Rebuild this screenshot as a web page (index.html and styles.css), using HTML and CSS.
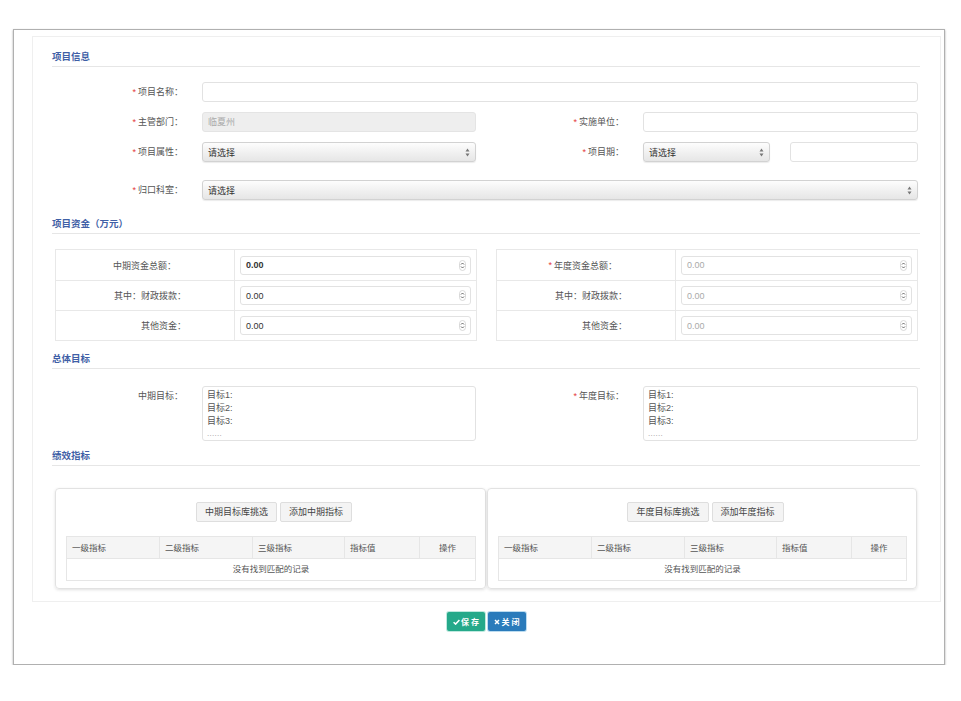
FILE: index.html
```html
<!DOCTYPE html>
<html lang="zh-CN">
<head>
<meta charset="utf-8">
<title>项目信息</title>
<link rel="stylesheet" href="styles.css">
</head>
<body>
<div class="frame">
  <div class="panel">
    <div class="sec-title first">项目信息</div>
    <div class="form-grid">
      <div class="lbl"><i>*</i>项目名称：</div>
      <div class="inp span3"></div>

      <div class="lbl"><i>*</i>主管部门：</div>
      <div class="inp disabled">临夏州</div>
      <div class="lbl"><i>*</i>实施单位：</div>
      <div class="inp"></div>

      <div class="lbl"><i>*</i>项目属性：</div>
      <div class="sel"><span>请选择</span><svg width="5" height="9" viewBox="0 0 5 9"><path d="M2.5 0.5L4.5 3.5H0.5Z M2.5 8.5L0.5 5.5H4.5Z" fill="#777"/></svg></div>
      <div class="lbl"><i>*</i>项目期：</div>
      <div class="pair">
        <div class="sel short"><span>请选择</span><svg width="5" height="9" viewBox="0 0 5 9"><path d="M2.5 0.5L4.5 3.5H0.5Z M2.5 8.5L0.5 5.5H4.5Z" fill="#777"/></svg></div>
        <div class="inp"></div>
      </div>

      <div class="lbl gap"><i>*</i>归口科室：</div>
      <div class="sel span3 gap"><span>请选择</span><svg width="5" height="9" viewBox="0 0 5 9"><path d="M2.5 0.5L4.5 3.5H0.5Z M2.5 8.5L0.5 5.5H4.5Z" fill="#777"/></svg></div>
    </div>

    <div class="sec-title s2">项目资金（万元）</div>
    <div class="fund-wrap">
      <div class="fund">
        <div class="fl r1 wide">中期资金总额：</div>
        <div class="fc r1"><div class="num"><span class="v bold">0.00</span><svg class="spin" width="7" height="11" viewBox="0 0 7 11"><rect x="0.5" y="0.5" width="6" height="10" rx="3" fill="none" stroke="#cfcfcf" stroke-width="0.8"/><path d="M2 4.5L3.5 3L5 4.5M2 6.5L3.5 8L5 6.5" fill="none" stroke="#555" stroke-width="0.9"/></svg></div></div>
        <div class="fl">其中：财政拨款：</div>
        <div class="fc"><div class="num"><span class="v">0.00</span><svg class="spin" width="7" height="11" viewBox="0 0 7 11"><rect x="0.5" y="0.5" width="6" height="10" rx="3" fill="none" stroke="#cfcfcf" stroke-width="0.8"/><path d="M2 4.5L3.5 3L5 4.5M2 6.5L3.5 8L5 6.5" fill="none" stroke="#555" stroke-width="0.9"/></svg></div></div>
        <div class="fl">其他资金：</div>
        <div class="fc"><div class="num"><span class="v">0.00</span><svg class="spin" width="7" height="11" viewBox="0 0 7 11"><rect x="0.5" y="0.5" width="6" height="10" rx="3" fill="none" stroke="#cfcfcf" stroke-width="0.8"/><path d="M2 4.5L3.5 3L5 4.5M2 6.5L3.5 8L5 6.5" fill="none" stroke="#555" stroke-width="0.9"/></svg></div></div>
      </div>
      <div class="fund">
        <div class="fl r1 wide"><i>*</i>年度资金总额：</div>
        <div class="fc r1"><div class="num"><span class="v muted">0.00</span><svg class="spin" width="7" height="11" viewBox="0 0 7 11"><rect x="0.5" y="0.5" width="6" height="10" rx="3" fill="none" stroke="#cfcfcf" stroke-width="0.8"/><path d="M2 4.5L3.5 3L5 4.5M2 6.5L3.5 8L5 6.5" fill="none" stroke="#555" stroke-width="0.9"/></svg></div></div>
        <div class="fl">其中：财政拨款：</div>
        <div class="fc"><div class="num"><span class="v muted">0.00</span><svg class="spin" width="7" height="11" viewBox="0 0 7 11"><rect x="0.5" y="0.5" width="6" height="10" rx="3" fill="none" stroke="#cfcfcf" stroke-width="0.8"/><path d="M2 4.5L3.5 3L5 4.5M2 6.5L3.5 8L5 6.5" fill="none" stroke="#555" stroke-width="0.9"/></svg></div></div>
        <div class="fl">其他资金：</div>
        <div class="fc"><div class="num"><span class="v muted">0.00</span><svg class="spin" width="7" height="11" viewBox="0 0 7 11"><rect x="0.5" y="0.5" width="6" height="10" rx="3" fill="none" stroke="#cfcfcf" stroke-width="0.8"/><path d="M2 4.5L3.5 3L5 4.5M2 6.5L3.5 8L5 6.5" fill="none" stroke="#555" stroke-width="0.9"/></svg></div></div>
      </div>
    </div>

    <div class="sec-title s3">总体目标</div>
    <div class="form-grid goals">
      <div class="lbl">中期目标：</div>
      <div class="ta"><div>目标1:</div><div>目标2:</div><div>目标3:</div><div class="dots">......</div></div>
      <div class="lbl"><i>*</i>年度目标：</div>
      <div class="ta"><div>目标1:</div><div>目标2:</div><div>目标3:</div><div class="dots">......</div></div>
    </div>

    <div class="sec-title s4">绩效指标</div>
    <div class="perf-wrap">
      <div class="perf">
        <div class="btn-row"><span class="btn">中期目标库挑选</span><span class="btn">添加中期指标</span></div>
        <div class="tbl">
          <div class="th">一级指标</div><div class="th">二级指标</div><div class="th">三级指标</div><div class="th">指标值</div><div class="th c">操作</div>
          <div class="empty">没有找到匹配的记录</div>
        </div>
      </div>
      <div class="perf">
        <div class="btn-row"><span class="btn">年度目标库挑选</span><span class="btn">添加年度指标</span></div>
        <div class="tbl">
          <div class="th">一级指标</div><div class="th">二级指标</div><div class="th">三级指标</div><div class="th">指标值</div><div class="th c">操作</div>
          <div class="empty">没有找到匹配的记录</div>
        </div>
      </div>
    </div>
  </div>
  <div class="actions">
    <span class="abtn save"><svg width="7" height="6" viewBox="0 0 7 6"><path d="M0.6 3.2L2.6 5.1L6.4 0.9" fill="none" stroke="#fff" stroke-width="1.5"/></svg>保 存</span>
    <span class="abtn close"><svg width="6" height="6" viewBox="0 0 6 6"><path d="M1 1L5 5M5 1L1 5" fill="none" stroke="#fff" stroke-width="1.5"/></svg>关 闭</span>
  </div>
</div>
</body>
</html>
```

FILE: styles.css
```css
* { box-sizing: border-box; }
html, body { margin: 0; padding: 0; background: #fff; }
body {
  font-family: "Liberation Sans", "Noto Sans CJK SC", sans-serif;
  font-size: 9px;
  color: #555;
}
i { font-style: normal; color: #e4393c; margin-right: 2px; font-size: 9px; }

.frame {
  margin: 29px 0 0 13px;
  width: 932px;
  height: 636px;
  border: 1px solid #b0b0b0;
  box-shadow: 0 1px 2px rgba(0,0,0,0.35);
  padding: 6px 3px 0 18px;
}
.panel {
  border: 1px solid #efefef;
  padding: 0 20px 12px 19px;
}

.sec-title {
  font-size: 9.5px;
  font-weight: bold;
  color: #3f5fa6;
  line-height: 14px;
  padding-bottom: 2px;
  border-bottom: 1px solid #e6e6e6;
}
.sec-title.first { margin-top: 13px; }
.sec-title.s2 { margin-top: 17px; }
.sec-title.s3 { margin-top: 11px; }
.sec-title.s4 { margin-top: 8px; }

.form-grid {
  display: grid;
  grid-template-columns: 150px 274px 167px 275px;
  row-gap: 10px;
  margin-top: 15px;
}
.form-grid.goals { margin-top: 17px; }
.lbl {
  text-align: right;
  padding-right: 19px;
  line-height: 20px;
  height: 20px;
  white-space: nowrap;
}
.span3 { grid-column: 2 / 5; }
.gap { margin-top: 8px; }

.inp {
  height: 20px;
  border: 1px solid #e2e2e2;
  border-radius: 3px;
  background: #fff;
  padding: 0 5px;
  line-height: 18px;
}
.inp.disabled { background: #eee; color: #aaa; border-color: #e4e4e4; }

.sel {
  height: 20px;
  border: 1px solid #d2d2d2;
  border-radius: 3px;
  background: linear-gradient(to bottom, #fdfdfd 0%, #f0f0f0 55%, #e6e6e6 100%);
  box-shadow: 0 1px 1px rgba(0,0,0,0.08);
  padding: 0 5px 0 5px;
  display: flex;
  align-items: center;
  justify-content: space-between;
  color: #333;
}
.pair {
  display: grid;
  grid-template-columns: 127px 128px;
  column-gap: 20px;
}

.fund-wrap {
  display: grid;
  grid-template-columns: 422px 422px;
  column-gap: 19px;
  margin: 15px 0 0 3px;
}
.fund {
  display: grid;
  grid-template-columns: 179px 1fr;
  grid-template-rows: 31px 30px 30px;
  border: 1px solid #e8e8e8;
  border-top: 0;
}
.fl, .fc {
  border-top: 1px solid #e8e8e8;
  display: flex;
  align-items: center;
}
.fl {
  justify-content: flex-end;
  padding-right: 48px;
  border-right: 1px solid #e8e8e8;
  white-space: nowrap;
}
.fl.wide { padding-right: 58px; }
.fc { padding: 0 5px; }
.num {
  width: 100%;
  height: 19px;
  border: 1px solid #e2e2e2;
  border-radius: 3px;
  padding: 0 4px 0 5px;
  display: flex;
  align-items: center;
  justify-content: space-between;
}
.v { color: #333; }
.v.bold { font-weight: bold; }
.v.muted { color: #aaa; }

.ta {
  height: 55px;
  border: 1px solid #e2e2e2;
  border-radius: 3px;
  padding: 2px 4px;
  line-height: 13px;
  color: #555;
}
.ta .dots { color: #999; font-size: 8px; line-height: 12px; letter-spacing: 0.3px; }

.perf-wrap {
  display: grid;
  grid-template-columns: 431px 430px;
  column-gap: 1px;
  margin: 22px 0 0 3px;
}
.perf {
  border: 1px solid #e2e2e2;
  border-radius: 4px;
  box-shadow: 0 1px 3px rgba(0,0,0,0.12);
  padding: 13px 9px 7px 10px;
}
.btn-row {
  display: flex;
  justify-content: center;
  gap: 3px;
  padding-left: 6px;
}
.btn {
  height: 20px;
  line-height: 18px;
  padding: 0 8px;
  background: #f4f4f4;
  border: 1px solid #dedede;
  border-radius: 2px;
  color: #444;
}
.tbl {
  margin-top: 14px;
  border: 1px solid #e6e6e6;
  display: grid;
  grid-template-columns: 92px 93px 92px 75px 1fr;
}
.th {
  height: 22px;
  line-height: 22px;
  background: #f5f5f5;
  border-left: 1px solid #e6e6e6;
  border-bottom: 1px solid #e6e6e6;
  padding-left: 5px;
  font-size: 8.5px;
  color: #555;
}
.th:first-child { border-left: 0; }
.th.c { text-align: center; padding-left: 0; }
.empty {
  grid-column: 1 / 6;
  height: 21px;
  line-height: 21px;
  text-align: center;
  font-size: 8.5px;
  color: #555;
}

.actions {
  display: flex;
  justify-content: center;
  gap: 3px;
  margin-top: 10px;
}
.abtn {
  width: 38px;
  height: 19px;
  border-radius: 2px;
  color: #fff;
  font-size: 8px;
  font-weight: bold;
  display: flex;
  align-items: center;
  justify-content: center;
  gap: 1px;
}
.abtn.save { background: #25a98a; box-shadow: 0 0 0 1px #bfe9df; }
.abtn.close { background: #2a7bbb; box-shadow: 0 0 0 1px #bcdcf0; }
```
